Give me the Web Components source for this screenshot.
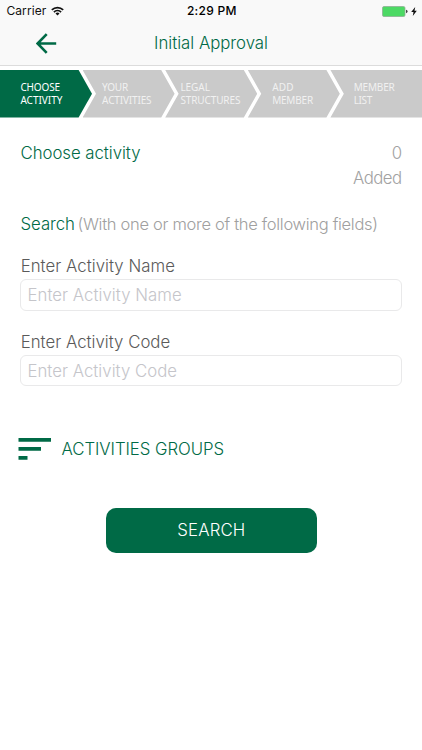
<!DOCTYPE html>
<html lang="en">
<head>
<meta charset="utf-8">
<title>Initial Approval</title>
<style>
html, body { margin: 0; height: 100%; background: #fff; overflow: hidden; }
body { font-family: Inter, "Liberation Sans", sans-serif; font-size: 16.8px; font-weight: 350; --brand: #006a46; }
</style>
</head>
<body>
<approval-screen></approval-screen>
<script>
class Base extends HTMLElement {
  constructor() {
    super();
    const t = document.createElement('template');
    t.innerHTML = this.markup();
    this.attachShadow({ mode: 'open' }).append(t.content.cloneNode(true));
  }
  markup() { return '<slot></slot>'; }
}

/* A single line of text whose tracking is adjusted to fill the given width. */
customElements.define('text-run', class extends Base {
  markup() {
    return `<style>:host{display:block;white-space:nowrap;flex:none}span{display:inline-block}</style><span><slot></slot></span>`;
  }
  connectedCallback() {
    this.fit();
    this.shadowRoot.querySelector('slot').addEventListener('slotchange', () => this.fit());
  }
  fit() {
    const span = this.shadowRoot.querySelector('span');
    const target = parseFloat(this.getAttribute('width'));
    const nodes = this.shadowRoot.querySelector('slot').assignedNodes({ flatten: true });
    const n = nodes.map(x => x.textContent).join('').trim().length;
    span.style.letterSpacing = span.style.marginRight = '';
    const natural = span.getBoundingClientRect().width;
    if (target && natural && n > 1) {
      const s = (target - natural) / (n - 1);
      span.style.letterSpacing = s + 'px';
      span.style.marginRight = -s + 'px';
    }
  }
});

customElements.define('status-bar', class extends Base {
  markup() {
    return `<style>
      :host{display:grid;grid-template-columns:1fr auto 1fr;height:22px;line-height:22px;font-size:12px;font-weight:400;color:#111;padding:0 5px 0 6.4px;align-items:center}
      .l,.r{display:flex;align-items:center}.l{gap:5px}.r{justify-content:flex-end;gap:3px}
      .t{font-weight:500;color:#000} svg{display:block}
    </style>
    <div class="l"><text-run width="40">Carrier</text-run>
      <svg width="13" height="10" viewBox="0 0 13 10" fill="none" stroke="#111" stroke-width="1.7"><path d="M.8 3.9a8.2 8.2 0 0 1 11.4 0M2.9 6.1a5.2 5.2 0 0 1 7.2 0"/><path d="M6.5 9.6 4.5 7.5a2.9 2.9 0 0 1 4 0z" fill="#111" stroke="none"/></svg>
    </div>
    <text-run class="t" width="49.5">2:29 PM</text-run>
    <div class="r">
      <svg width="26" height="11" viewBox="0 0 26 11"><rect x=".5" y=".5" width="22.5" height="10" rx="1.5" fill="#4cd964" stroke="#8fae94" stroke-width=".8"/><path d="M24 3.8q1.6.3 1.6 1.7T24 7.2z" fill="#444"/></svg>
      <svg width="6" height="9" viewBox="0 0 6 9"><path d="M4.2 0 .2 5h2.3L1.8 9 5.8 3.8H3.5z" fill="#111"/></svg>
    </div>`;
  }
});

customElements.define('nav-bar', class extends Base {
  markup() {
    return `<style>
      :host{display:grid;grid-template-columns:1fr auto 1fr;height:43px;border-bottom:1px solid #dcdcdc;color:var(--brand);line-height:42px}
      svg{margin:10.5px 0 0 36px;display:block}
    </style>
    <svg width="21" height="21" viewBox="0 0 21 21" fill="none" stroke="#006a46" stroke-width="2.6"><path d="M20.2 10.5H2M10.7 1.2 1.6 10.5l9.1 9.3"/></svg>
    <text-run width="114"><slot></slot></text-run>`;
  }
});

customElements.define('step-item', class extends Base {
  markup() {
    return `<style>
      :host{display:block;box-sizing:border-box;flex:none;width:92px;height:47.5px;margin-right:-9.4px;padding:10.6px 0 0 19.5px;background:#cacaca;color:#f1f1f1;
        clip-path:polygon(0 0,calc(100% - 13.4px) 0,100% 50%,calc(100% - 13.4px) 100%,0 100%,13.4px 50%);
        font:10px/13px "Noto Sans","Open Sans",sans-serif}
      :host([active]){background:var(--brand);color:#fff;clip-path:polygon(0 0,calc(100% - 13.4px) 0,100% 50%,calc(100% - 13.4px) 100%,0 100%)}
      :host([last]){clip-path:polygon(0 0,100% 0,100% 100%,0 100%,13.4px 50%);margin:0;flex:1}
    </style><slot></slot>`;
  }
});

customElements.define('step-bar', class extends Base {
  markup() {
    return `<style>:host{display:flex;margin-top:4px;height:47.5px;overflow:hidden}
      .s1{padding-left:20.4px}.s3{padding-left:15.2px}.s4{padding-left:24.3px}.s5{padding-left:23.3px}</style>
    <step-item active class="s1"><text-run width="39.7">CHOOSE</text-run><text-run width="42">ACTIVITY</text-run></step-item>
    <step-item><text-run width="26">YOUR</text-run><text-run width="49.5">ACTIVITIES</text-run></step-item>
    <step-item class="s3"><text-run width="29.5">LEGAL</text-run><text-run width="60">STRUCTURES</text-run></step-item>
    <step-item class="s4"><text-run width="21.5">ADD</text-run><text-run width="41">MEMBER</text-run></step-item>
    <step-item last class="s5"><text-run width="41">MEMBER</text-run><text-run width="18.5">LIST</text-run></step-item>`;
  }
});

customElements.define('form-field', class extends Base {
  markup() {
    const label = this.getAttribute('label'), w = this.getAttribute('text-width');
    return `<style>
      :host{display:block;color:#5a5a5a}
      .label{line-height:26px;padding-left:.2px}
      .box{box-sizing:border-box;height:31.5px;width:381.5px;margin-left:-.5px;border:1px solid #e9e9ea;border-radius:6px;line-height:30px;padding-left:6.5px;color:#c5c5ca}
    </style>
    <text-run class="label" width="${w}">${label}</text-run>
    <div class="box"><text-run width="${w}">${label}</text-run></div>`;
  }
});

customElements.define('group-link', class extends Base {
  markup() {
    return `<style>:host{display:flex;align-items:center;gap:10.5px;color:var(--brand);line-height:26px}text-run{padding-top:1px}</style>
    <svg width="33" height="22" viewBox="0 0 33 22" fill="#006a46"><path d="M.5 0H33v3.7H.5zM.5 9H23v3.7H.5zM.5 18H9.5v3.7H.5z"/></svg>
    <text-run width="162.5"><slot></slot></text-run>`;
  }
});

customElements.define('primary-button', class extends Base {
  markup() {
    return `<style>:host{display:flex;justify-content:center;width:210.5px;height:44.7px;line-height:45.7px;border-radius:10px;background:var(--brand);color:#fff}</style>
    <text-run width="68"><slot></slot></text-run>`;
  }
});

customElements.define('approval-screen', class extends Base {
  markup() {
    return `<style>
      :host{display:block;height:750px;background:#fff}
      header{background:#f9f9f9}
      main{padding:23.2px 20px 0 20.5px;line-height:25px}
      .row{display:flex;justify-content:space-between;color:#a0a0a0}
      .added{display:flex;flex-direction:column;align-items:flex-end;color:#a2a2a2}
      .green{color:var(--brand)}
      .search{justify-content:flex-start;gap:2.5px;margin-top:21.5px}
      .note{font-weight:300;font-size:16.5px}
      form-field{margin-top:16px}
      form-field + form-field{margin-top:18px}
      group-link{margin:49.2px 0 0 -2.5px}
      primary-button{margin:45.6px 0 0 85.5px}
    </style>
    <header><status-bar></status-bar><nav-bar>Initial Approval</nav-bar></header>
    <step-bar></step-bar>
    <main>
      <div class="row"><text-run class="green" width="120">Choose activity</text-run>
        <div class="added"><text-run>0</text-run><text-run width="49">Added</text-run></div></div>
      <div class="row search"><text-run class="green" width="54.5">Search</text-run><text-run class="note" width="300.5">(With one or more of the following fields)</text-run></div>
      <form-field label="Enter Activity Name" text-width="154.2"></form-field>
      <form-field label="Enter Activity Code" text-width="149.5"></form-field>
      <group-link>ACTIVITIES GROUPS</group-link>
      <primary-button>SEARCH</primary-button>
    </main>`;
  }
});
</script>
</body>
</html>
